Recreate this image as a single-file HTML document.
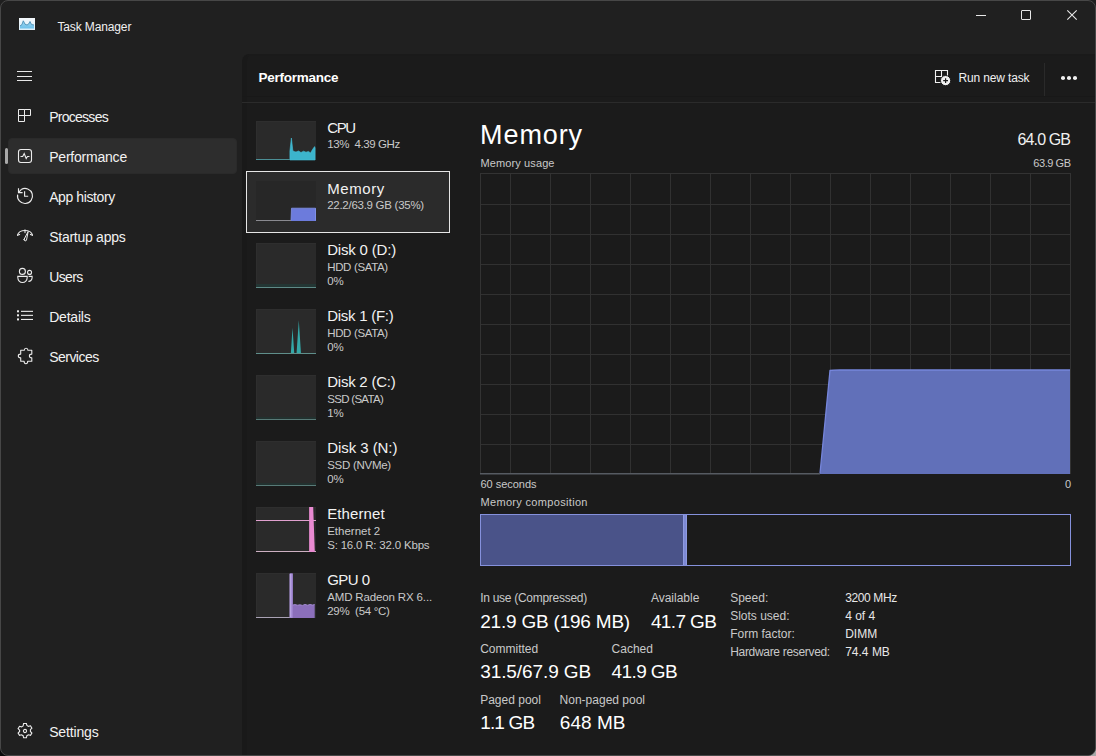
<!DOCTYPE html>
<html><head><meta charset="utf-8">
<style>
html,body{margin:0;padding:0;width:1096px;height:756px;overflow:hidden;background:#1f1f1f}
body{font-family:"Liberation Sans",sans-serif;position:relative}
.a{position:absolute}
.t{position:absolute;white-space:pre;line-height:1;font-family:"Liberation Sans",sans-serif}
svg{position:absolute;overflow:visible}
.th{position:absolute;left:256px;width:60px;background:#2a2a2a;box-shadow:inset 1px 1px 0 #2e2e2e}
</style></head><body>
<!-- outside corners -->
<div class="a" style="left:1084px;top:744px;width:12px;height:12px;background:#a8a8a8"></div>
<div class="a" style="left:0;top:740px;width:16px;height:16px;background:#0a0a0a"></div>
<!-- window -->
<div class="a" style="left:0;top:0;width:1096px;height:756px;box-sizing:border-box;border:1px solid #474747;border-radius:8px;background:#202020"></div>
<!-- pane -->
<div class="a" style="left:241.5px;top:54px;width:853.5px;height:701px;box-sizing:border-box;background:#1b1b1b;border-top:2px solid #1a1a1a;border-left:5px solid #191919;border-top-left-radius:7px;border-bottom-right-radius:7px"></div>
<!-- header separators -->
<div class="a" style="left:242px;top:96px;width:853px;height:1px;background:#181818"></div>
<div class="a" style="left:242px;top:102px;width:853px;height:1px;background:#2b2b2b"></div>
<div class="a" style="left:1044px;top:63px;width:1px;height:33px;background:#2a2a2a"></div>

<!-- window controls -->
<div class="a" style="left:976px;top:15px;width:10px;height:1px;background:#e8e8e8"></div>
<div class="a" style="left:1021px;top:10px;width:10px;height:10px;box-sizing:border-box;border:1px solid #e8e8e8;border-radius:1px"></div>
<svg style="left:1067px;top:10px" width="10" height="10" viewBox="0 0 10 10"><path d="M0.3 0.3L9.7 9.7M9.7 0.3L0.3 9.7" stroke="#e8e8e8" stroke-width="1.1"/></svg>

<!-- app icon -->
<div class="a" style="left:19px;top:18px;width:16px;height:12px;background:linear-gradient(#f4f8fc,#dceef8)"></div>
<svg style="left:19px;top:18px" width="16" height="12" viewBox="0 0 16 12"><defs><linearGradient id="ig" x1="0" y1="0" x2="0" y2="1"><stop offset="0" stop-color="#9fd6f0"/><stop offset="1" stop-color="#6cc0ea"/></linearGradient></defs><path d="M1 8 L3 6.5 L4.3 2.8 L6 6.2 L8 7 L9.5 6.2 L11 3.5 L12.5 6.5 L15 7 V10.5 H1Z" fill="url(#ig)"/><path d="M1 8 L3 6.5 L4.3 2.8 L6 6.2 L8 7 L9.5 6.2 L11 3.5 L12.5 6.5 L15 7" fill="none" stroke="#4a8fb5" stroke-width="0.9"/></svg>

<!-- nav: hamburger -->
<div class="a" style="left:17px;top:71px;width:15px;height:1px;background:#e8e8e8"></div>
<div class="a" style="left:17px;top:76px;width:15px;height:1px;background:#e8e8e8"></div>
<div class="a" style="left:17px;top:80px;width:15px;height:1px;background:#e8e8e8"></div>
<!-- selected nav bg -->
<div class="a" style="left:8px;top:138px;width:229px;height:36px;box-sizing:border-box;background:#2d2d2d;border:1px solid #2a2a2a;border-radius:4px"></div>
<div class="a" style="left:5px;top:148px;width:3px;height:16px;background:#a9a9a9;border-radius:2px"></div>
<!-- nav icons -->
<svg style="left:17px;top:108px" width="16" height="16" viewBox="0 0 16 16" fill="none" stroke="#ececec" stroke-width="1"><path d="M1.5 1.5h6v6h-6zM7.5 1.5h6v6h-6zM1.5 7.5h6v6h-6z"/></svg>
<svg style="left:17px;top:148px" width="16" height="16" viewBox="0 0 16 16" fill="none" stroke="#ececec" stroke-width="1.1"><rect x="1.5" y="1.5" width="13" height="13" rx="2.5"/><path d="M3.5 8.5h2.2l1.5-3 2 5 1.3-2h2"/></svg>
<svg style="left:16px;top:186px" width="18" height="18" viewBox="0 0 18 18" fill="none" stroke="#ececec" stroke-width="1.15"><path d="M5.25 3.5A7.5 7.5 0 1 1 1.64 8.6"/><path d="M5.4 3.4L2.7 6.4"/><path d="M2.5 2.2V6.6H6.6"/><path d="M8.6 5.2V10.2H12.2"/></svg>
<svg style="left:16px;top:228px" width="18" height="14" viewBox="0 0 18 14" fill="none" stroke="#ececec" stroke-width="1.1" stroke-linecap="round"><path d="M1.5 7.2A7.6 5.6 0 0 1 16.5 7.2"/><path d="M1.6 7.2L3.6 6.4M16.4 7.2L14.4 6.4M9 1.8V4.6"/><path d="M8.1 11.3L12.2 3.4L10.5 12A1.25 1.25 0 0 1 8.1 11.3Z" stroke-width="1" stroke-linejoin="round"/></svg>
<svg style="left:16px;top:267px" width="18" height="17" viewBox="0 0 18 17" fill="none" stroke="#ececec" stroke-width="1.1"><circle cx="6.4" cy="4.4" r="3"/><circle cx="13.55" cy="5.4" r="2"/><path d="M1.8 9.4H11.2V10.6A4.7 4.9 0 0 1 1.8 10.6Z"/><path d="M12.6 9.4H16.1V10.8A3.4 3.8 0 0 1 12.4 14.4"/></svg>
<svg style="left:16px;top:309px" width="18" height="14" viewBox="0 0 18 14" fill="#ececec" stroke="none"><rect x="1" y="1.3" width="2" height="2"/><rect x="1" y="5.3" width="2" height="2"/><rect x="1" y="9.4" width="2" height="2"/><rect x="5" y="1.8" width="12" height="1.1"/><rect x="5" y="5.8" width="12" height="1.1"/><rect x="5" y="9.9" width="12" height="1.1"/></svg>
<svg style="left:16px;top:347px" width="18" height="18" viewBox="0 0 18 18" fill="none" stroke="#ececec" stroke-width="1.1" stroke-linejoin="round"><path d="M4.7 3.3H8.3A1.8 2 0 0 1 11.9 3.3H15.8V7.1A2.4 1.8 0 0 0 15.8 10.7V14.3H11.7A1.8 2.4 0 0 1 8.1 14.3H4.7V10.7A2.4 1.8 0 0 1 4.7 7.1Z"/></svg>
<svg style="left:16px;top:722px" width="18" height="18" viewBox="0 0 18 18" fill="none" stroke="#ececec" stroke-width="1.1"><path d="M7.6 1.5h2.8l.5 2 1.6.9 2-.6 1.4 2.4-1.5 1.5v1.8l1.5 1.5-1.4 2.4-2-.6-1.6.9-.5 2H7.6l-.5-2-1.6-.9-2 .6-1.4-2.4 1.5-1.5V8.2L2.1 6.7l1.4-2.4 2 .6 1.6-.9z"/><circle cx="9" cy="9" r="1.6"/></svg>

<!-- run new task icon -->
<svg style="left:934px;top:69px" width="18" height="18" viewBox="0 0 18 18" fill="none" stroke="#f0f0f0" stroke-width="1.1"><path d="M1.5 1.5h6v6h-6zM7.5 1.5h6v6h-6zM1.5 7.5h6v6h-6z"/><circle cx="11.6" cy="11.6" r="5.1" fill="#f0f0f0" stroke="#1c1c1c" stroke-width="1"/><path d="M11.6 9.2v4.8M9.2 11.6h4.8" stroke="#1c1c1c" stroke-width="1.2"/></svg>
<!-- more dots -->
<div class="a" style="left:1061px;top:76px;width:4px;height:3.5px;border-radius:50%;background:#f0f0f0"></div>
<div class="a" style="left:1067px;top:76px;width:4px;height:3.5px;border-radius:50%;background:#f0f0f0"></div>
<div class="a" style="left:1073px;top:76px;width:4px;height:3.5px;border-radius:50%;background:#f0f0f0"></div>

<!-- device list selection -->
<div class="a" style="left:246px;top:171px;width:204px;height:62px;box-sizing:border-box;border:1px solid #e6e6e6;background:#2b2b2b"></div>

<!-- thumbnails -->
<div class="th" style="top:121px;height:39px"></div>
<svg style="left:256px;top:121px" width="60" height="39" viewBox="0 0 60 39"><path d="M33.9 39 V30 L35.4 17 L36.8 29.5 L38 30.5 L40 31 L42.5 30 L45 31.5 L47.5 30.2 L50 31.2 L52.5 30.4 L54.5 32 L56.5 28.5 L58.6 25.6 L59.1 27 V39Z" fill="#3cb4cc" stroke="#44c0d8" stroke-width="0.6"/><rect x="0" y="38" width="34" height="1" fill="#4c8f96"/></svg>

<div class="th" style="top:181px;height:40px;background:#272727;box-shadow:none"></div>
<svg style="left:256px;top:181px" width="60" height="40" viewBox="0 0 60 40"><path d="M35 40 L35.5 27.2 H60 V40Z" fill="#6c7bdc"/><path d="M35 39.5 L35.5 27.2 H59.5 V39.5" fill="none" stroke="#8494ea" stroke-width="0.8"/><rect x="0" y="39" width="35" height="1" fill="#8a8a90"/></svg>

<div class="th" style="top:243px;height:45px"></div>
<div class="a" style="left:256px;top:284px;width:60px;height:3px;background:#233634"></div><div class="a" style="left:256px;top:287px;width:60px;height:1px;background:#5f8a87"></div>
<div class="th" style="top:309px;height:45px"></div>
<svg style="left:256px;top:309px" width="60" height="45" viewBox="0 0 60 45"><path d="M34.8 45 L36.5 18.8 L38.3 45Z M40.5 45 L42.8 11.2 L45 45Z" fill="#34a8a8"/><rect x="0" y="44" width="60" height="1" fill="#5f8f8b"/></svg>
<div class="th" style="top:375px;height:45px"></div>
<div class="a" style="left:256px;top:417px;width:60px;height:2px;background:#22312f"></div><div class="a" style="left:256px;top:419px;width:60px;height:1px;background:#587a77"></div>
<div class="th" style="top:441px;height:45px"></div>
<div class="a" style="left:256px;top:483px;width:60px;height:2px;background:#22312f"></div><div class="a" style="left:256px;top:485px;width:60px;height:1px;background:#587a77"></div>
<div class="th" style="top:507px;height:45px"></div>
<svg style="left:256px;top:507px" width="60" height="45" viewBox="0 0 60 45"><rect x="0" y="13" width="60" height="1" fill="#e0a0cf"/><rect x="0" y="44" width="60" height="1" fill="#cdb0c2"/><path d="M53.1 0H57.2L58.8 45H53.1Z" fill="#e98ad1"/></svg>
<div class="th" style="top:573px;height:45px"></div>
<svg style="left:256px;top:573px" width="60" height="45" viewBox="0 0 60 45"><rect x="0" y="44" width="34" height="1" fill="#a9a2b4"/><path d="M33.7 45 V0.5 H36.8 V32 L39 31.6 L41.5 32.2 L44 31.8 L46.5 32.4 L49 31.4 L51.5 32.2 L54 31.5 L56.5 32 L58.7 31.6 V45Z" fill="#8b6fbb"/><path d="M33.8 45 V0.5 H36.6 V45Z" fill="#a78ed8"/><path d="M34.2 44 V1" stroke="#c8b8ea" stroke-width="0.8"/><path d="M36.8 32 L39 31.6 L41.5 32.2 L44 31.8 L46.5 32.4 L49 31.4 L51.5 32.2 L54 31.5 L56.5 32 L58.7 31.6" fill="none" stroke="#a78ed8" stroke-width="0.9"/></svg>

<!-- main graph -->
<svg style="left:480px;top:173px" width="591" height="301" viewBox="0 0 591 301">
 <g stroke="#313131" stroke-width="1">
  <path d="M30.5 0V300M70.5 0V300M110.5 0V300M150.5 0V300M190.5 0V300M230.5 0V300M270.5 0V300M310.5 0V300M350.5 0V300M390.5 0V300M430.5 0V300M470.5 0V300M510.5 0V300M550.5 0V300"/>
  <path d="M0 31.5H591M0 61.5H591M0 91.5H591M0 121.5H591M0 151.5H591M0 181.5H591M0 211.5H591M0 241.5H591M0 271.5H591"/>
 </g>
 <rect x="0.5" y="0.5" width="590" height="300" fill="none" stroke="#333333"/>
 <path d="M340 301 L350 197.5 Q352 197 360 197 H590 V301Z" fill="#6170b9"/>
 <path d="M340 300.5 L350 197.5 Q352 197 360 197 H590" fill="none" stroke="#7686dc" stroke-width="1.3"/>
 <path d="M0 300.8H340" stroke="#565b62" stroke-width="1.5"/>
</svg>

<!-- composition bar -->
<div class="a" style="left:480px;top:514px;width:591px;height:52px;box-sizing:border-box;border:1px solid #8591dc"></div>
<div class="a" style="left:481px;top:515px;width:202px;height:50px;background:#4a5389"></div>
<div class="a" style="left:683px;top:515px;width:4px;height:50px;background:#7d89d4"></div>
<div class="a" style="left:683px;top:515px;width:1px;height:50px;background:#8e9ae0"></div>
<div class="a" style="left:686px;top:515px;width:1px;height:50px;background:#8e9ae0"></div>

<div class="t" style="top:20.94px;font-size:12px;font-weight:400;color:#f0f0f0;letter-spacing:-0.125px;left:57.40px;">Task Manager</div>
<div class="t" style="top:110.15px;font-size:14px;font-weight:400;color:#f2f2f2;letter-spacing:-0.732px;left:49.20px;">Processes</div>
<div class="t" style="top:150.15px;font-size:14px;font-weight:400;color:#f2f2f2;letter-spacing:-0.216px;left:49.20px;">Performance</div>
<div class="t" style="top:190.45px;font-size:14px;font-weight:400;color:#f2f2f2;letter-spacing:-0.405px;left:49.20px;">App history</div>
<div class="t" style="top:229.85px;font-size:14px;font-weight:400;color:#f2f2f2;letter-spacing:-0.263px;left:49.20px;">Startup apps</div>
<div class="t" style="top:270.15px;font-size:14px;font-weight:400;color:#f2f2f2;letter-spacing:-0.641px;left:49.20px;">Users</div>
<div class="t" style="top:310.15px;font-size:14px;font-weight:400;color:#f2f2f2;letter-spacing:-0.216px;left:49.20px;">Details</div>
<div class="t" style="top:350.15px;font-size:14px;font-weight:400;color:#f2f2f2;letter-spacing:-0.527px;left:49.20px;">Services</div>
<div class="t" style="top:724.95px;font-size:14px;font-weight:400;color:#f2f2f2;letter-spacing:-0.156px;left:49.20px;">Settings</div>
<div class="t" style="top:71.37px;font-size:13.5px;font-weight:700;color:#ffffff;letter-spacing:-0.255px;left:258.50px;">Performance</div>
<div class="t" style="top:72.04px;font-size:12px;font-weight:400;color:#f0f0f0;letter-spacing:-0.155px;left:958.50px;">Run new task</div>
<div class="t" style="top:119.90px;font-size:15px;font-weight:400;color:#f2f2f2;letter-spacing:-1.336px;left:327.20px;">CPU</div>
<div class="t" style="top:138.87px;font-size:11.5px;font-weight:400;color:#c9c9c9;letter-spacing:-0.415px;left:327.20px;">13%  4.39 GHz</div>
<div class="t" style="top:180.90px;font-size:15px;font-weight:400;color:#f2f2f2;letter-spacing:0.566px;left:327.20px;">Memory</div>
<div class="t" style="top:199.87px;font-size:11.5px;font-weight:400;color:#c9c9c9;letter-spacing:-0.274px;left:327.20px;">22.2/63.9 GB (35%)</div>
<div class="t" style="top:241.90px;font-size:15px;font-weight:400;color:#f2f2f2;letter-spacing:-0.184px;left:327.20px;">Disk 0 (D:)</div>
<div class="t" style="top:261.67px;font-size:11.5px;font-weight:400;color:#c9c9c9;letter-spacing:-0.345px;left:327.20px;">HDD (SATA)</div>
<div class="t" style="top:275.87px;font-size:11.5px;font-weight:400;color:#c9c9c9;letter-spacing:-0.125px;left:327.20px;">0%</div>
<div class="t" style="top:307.90px;font-size:15px;font-weight:400;color:#f2f2f2;letter-spacing:-0.257px;left:327.20px;">Disk 1 (F:)</div>
<div class="t" style="top:327.67px;font-size:11.5px;font-weight:400;color:#c9c9c9;letter-spacing:-0.345px;left:327.20px;">HDD (SATA)</div>
<div class="t" style="top:341.87px;font-size:11.5px;font-weight:400;color:#c9c9c9;letter-spacing:-0.125px;left:327.20px;">0%</div>
<div class="t" style="top:373.90px;font-size:15px;font-weight:400;color:#f2f2f2;letter-spacing:-0.234px;left:327.20px;">Disk 2 (C:)</div>
<div class="t" style="top:393.67px;font-size:11.5px;font-weight:400;color:#c9c9c9;letter-spacing:-0.694px;left:327.20px;">SSD (SATA)</div>
<div class="t" style="top:407.87px;font-size:11.5px;font-weight:400;color:#c9c9c9;letter-spacing:-0.125px;left:327.20px;">1%</div>
<div class="t" style="top:439.90px;font-size:15px;font-weight:400;color:#f2f2f2;letter-spacing:-0.054px;left:327.20px;">Disk 3 (N:)</div>
<div class="t" style="top:459.67px;font-size:11.5px;font-weight:400;color:#c9c9c9;letter-spacing:-0.273px;left:327.20px;">SSD (NVMe)</div>
<div class="t" style="top:473.87px;font-size:11.5px;font-weight:400;color:#c9c9c9;letter-spacing:-0.125px;left:327.20px;">0%</div>
<div class="t" style="top:505.90px;font-size:15px;font-weight:400;color:#f2f2f2;letter-spacing:0.097px;left:327.20px;">Ethernet</div>
<div class="t" style="top:525.67px;font-size:11.5px;font-weight:400;color:#c9c9c9;letter-spacing:-0.009px;left:327.20px;">Ethernet 2</div>
<div class="t" style="top:539.87px;font-size:11.5px;font-weight:400;color:#c9c9c9;letter-spacing:-0.196px;left:327.20px;">S: 16.0 R: 32.0 Kbps</div>
<div class="t" style="top:571.90px;font-size:15px;font-weight:400;color:#f2f2f2;letter-spacing:-0.554px;left:327.20px;">GPU 0</div>
<div class="t" style="top:591.67px;font-size:11.5px;font-weight:400;color:#c9c9c9;letter-spacing:-0.141px;left:327.20px;">AMD Radeon RX 6...</div>
<div class="t" style="top:605.87px;font-size:11.5px;font-weight:400;color:#c9c9c9;letter-spacing:-0.297px;left:327.20px;">29%  (54 °C)</div>
<div class="t" style="top:121.84px;font-size:27px;font-weight:400;color:#ffffff;letter-spacing:0.897px;left:480.10px;">Memory</div>
<div class="t" style="top:131.66px;font-size:16px;font-weight:400;color:#f0f0f0;letter-spacing:-0.884px;left:1017.60px;">64.0 GB</div>
<div class="t" style="top:158.49px;font-size:11px;font-weight:400;color:#c9c9c9;letter-spacing:0.112px;left:480.50px;">Memory usage</div>
<div class="t" style="top:158.39px;font-size:11px;font-weight:400;color:#c9c9c9;letter-spacing:-0.443px;left:1033.30px;">63.9 GB</div>
<div class="t" style="top:478.99px;font-size:11px;font-weight:400;color:#c9c9c9;letter-spacing:-0.030px;left:480.50px;">60 seconds</div>
<div class="t" style="top:478.99px;font-size:11px;font-weight:400;color:#c9c9c9;left:1064.88px;">0</div>
<div class="t" style="top:497.39px;font-size:11px;font-weight:400;color:#c9c9c9;letter-spacing:0.324px;left:480.50px;">Memory composition</div>
<div class="t" style="top:592.34px;font-size:12px;font-weight:400;color:#c9c9c9;letter-spacing:-0.280px;left:480.20px;">In use (Compressed)</div>
<div class="t" style="top:611.72px;font-size:19px;font-weight:400;color:#ffffff;letter-spacing:-0.208px;left:480.20px;">21.9 GB (196 MB)</div>
<div class="t" style="top:592.34px;font-size:12px;font-weight:400;color:#c9c9c9;left:650.90px;">Available</div>
<div class="t" style="top:611.72px;font-size:19px;font-weight:400;color:#ffffff;letter-spacing:-0.620px;left:650.90px;">41.7 GB</div>
<div class="t" style="top:642.64px;font-size:12px;font-weight:400;color:#c9c9c9;left:480.20px;">Committed</div>
<div class="t" style="top:662.32px;font-size:19px;font-weight:400;color:#ffffff;letter-spacing:-0.088px;left:480.20px;">31.5/67.9 GB</div>
<div class="t" style="top:642.64px;font-size:12px;font-weight:400;color:#c9c9c9;left:611.60px;">Cached</div>
<div class="t" style="top:662.32px;font-size:19px;font-weight:400;color:#ffffff;letter-spacing:-0.620px;left:611.60px;">41.9 GB</div>
<div class="t" style="top:693.74px;font-size:12px;font-weight:400;color:#c9c9c9;left:480.20px;">Paged pool</div>
<div class="t" style="top:713.42px;font-size:19px;font-weight:400;color:#ffffff;letter-spacing:-0.831px;left:480.20px;">1.1 GB</div>
<div class="t" style="top:693.74px;font-size:12px;font-weight:400;color:#c9c9c9;left:559.60px;">Non-paged pool</div>
<div class="t" style="top:713.42px;font-size:19px;font-weight:400;color:#ffffff;letter-spacing:0.043px;left:559.80px;">648 MB</div>
<div class="t" style="top:592.04px;font-size:12px;font-weight:400;color:#c9c9c9;left:730.20px;">Speed:</div>
<div class="t" style="top:592.04px;font-size:12px;font-weight:400;color:#e8e8e8;letter-spacing:-0.386px;left:845.20px;">3200 MHz</div>
<div class="t" style="top:609.99px;font-size:12px;font-weight:400;color:#c9c9c9;left:730.20px;">Slots used:</div>
<div class="t" style="top:609.99px;font-size:12px;font-weight:400;color:#e8e8e8;left:845.20px;">4 of 4</div>
<div class="t" style="top:627.94px;font-size:12px;font-weight:400;color:#c9c9c9;left:730.20px;">Form factor:</div>
<div class="t" style="top:627.94px;font-size:12px;font-weight:400;color:#e8e8e8;left:845.20px;">DIMM</div>
<div class="t" style="top:645.89px;font-size:12px;font-weight:400;color:#c9c9c9;letter-spacing:-0.316px;left:730.20px;">Hardware reserved:</div>
<div class="t" style="top:645.89px;font-size:12px;font-weight:400;color:#e8e8e8;left:845.20px;">74.4 MB</div>
</body></html>
